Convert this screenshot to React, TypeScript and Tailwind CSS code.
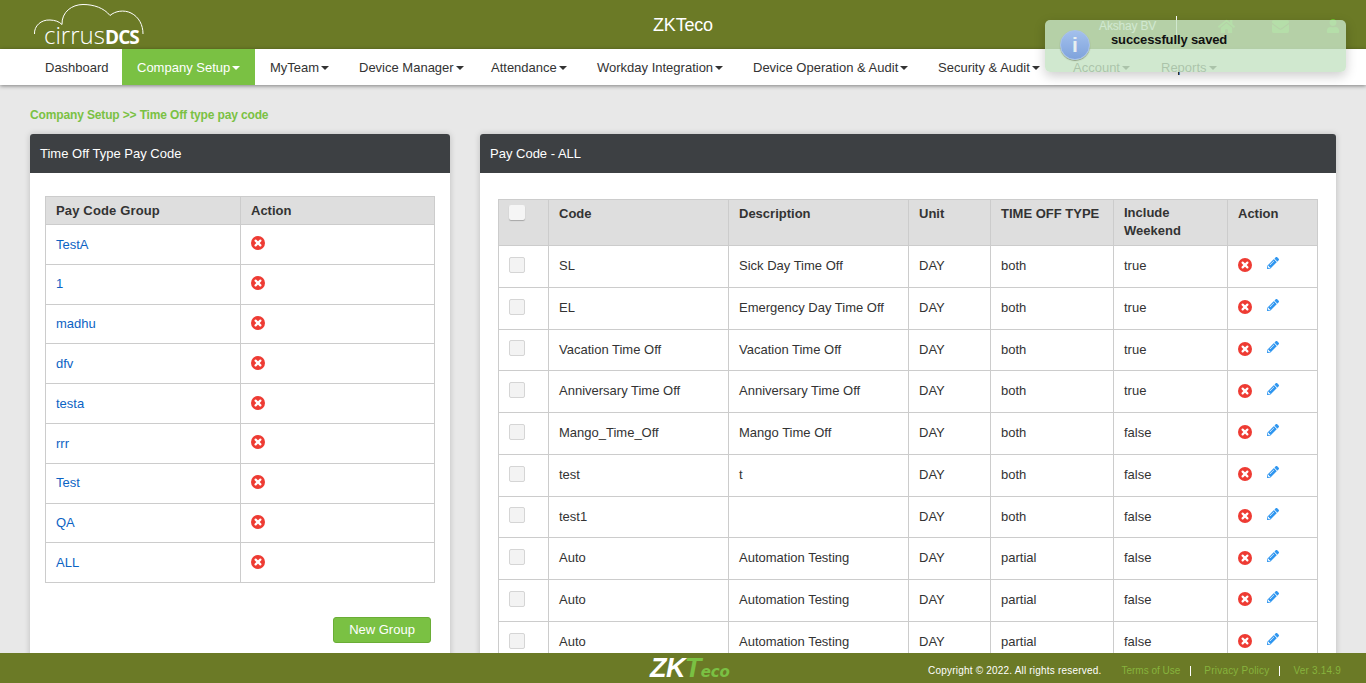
import { FaEnvelope, FaHome, FaPencilAlt, FaUser } from "react-icons/fa";

const NAV_ITEMS = [
  { label: "Dashboard", width: "w-[92px]" },
  { label: "Company Setup", width: "w-[133px]", caret: true, active: true },
  { label: "MyTeam", width: "w-[89px]", caret: true },
  { label: "Device Manager", width: "w-[132px]", caret: true },
  { label: "Attendance", width: "w-[106px]", caret: true },
  { label: "Workday Integration", width: "w-[156px]", caret: true },
  { label: "Device Operation & Audit", width: "w-[185px]", caret: true },
  { label: "Security & Audit", width: "w-[135px]", caret: true },
  { label: "Account", width: "w-[88px]", caret: true },
  { label: "Reports", width: "w-[90px]", caret: true },
];

const GROUPS = ["TestA", "1", "madhu", "dfv", "testa", "rrr", "Test", "QA", "ALL"];

const PAY_CODES = [
  ["SL", "Sick Day Time Off", "DAY", "both", "true"],
  ["EL", "Emergency Day Time Off", "DAY", "both", "true"],
  ["Vacation Time Off", "Vacation Time Off", "DAY", "both", "true"],
  ["Anniversary Time Off", "Anniversary Time Off", "DAY", "both", "true"],
  ["Mango_Time_Off", "Mango Time Off", "DAY", "both", "false"],
  ["test", "t", "DAY", "both", "false"],
  ["test1", "", "DAY", "both", "false"],
  ["Auto", "Automation Testing", "DAY", "partial", "false"],
  ["Auto", "Automation Testing", "DAY", "partial", "false"],
  ["Auto", "Automation Testing", "DAY", "partial", "false"],
];

function DeleteIcon() {
  return (
    <svg width="14" height="14" viewBox="0 0 14 14" className="block -mt-[2px]">
      <circle cx="7" cy="7" r="7" fill="#ee3b33" />
      <path d="M4.6 4.6l4.8 4.8M9.4 4.6l-4.8 4.8" stroke="#fff" strokeWidth="2.2" strokeLinecap="round" />
    </svg>
  );
}

function Logo() {
  return (
    <div className="relative w-[150px] h-[49px] text-white">
      <svg width="150" height="49" viewBox="0 0 150 49" fill="none" className="absolute left-0 top-0">
        <path
          d="M34.5 34C34 26 41 19.5 50 20C55 20.2 59 21.5 62 24.5C61.5 12 72 4.5 83 4.5C94 4.5 104 8 110 15.5C115 11 124 9.5 131 13C139 17 143 25 143 34"
          stroke="#fff"
          strokeWidth="1"
        />
      </svg>
      <span className="absolute left-[44px] top-[19px] font-['Open_Sans',sans-serif] text-[24px] leading-[32px] font-light">
        cirrus
      </span>
      <span className="absolute left-[105px] top-[24px] font-['Open_Sans',sans-serif] text-[19px] leading-[26px] font-bold tracking-[-0.9px]">
        DCS
      </span>
    </div>
  );
}

function PanelHeader({ title }: { title: string }) {
  return <div className="h-[39px] bg-[#3d4043] rounded-t-[3px] px-[10px] flex items-center text-white">{title}</div>;
}

export default function App() {
  return (
    <div className="relative w-[1366px] h-[683px] overflow-hidden bg-[#e8e8e8] font-['Liberation_Sans',Arial,sans-serif] text-[13px] text-[#333]">
      <header className="h-[49px] bg-[#6b7a26] grid grid-cols-[1fr_auto_1fr] items-center">
        <Logo />
        <div className="text-white text-[18px] tracking-[-0.2px] pt-[1px]">ZKTeco</div>
        <div className="flex items-center justify-end h-full pt-[3px]">
          <span className="text-white text-[12px] tracking-[-0.2px]">Akshay BV</span>
          <span className="w-px h-[20px] bg-white ml-[20px] mr-[41px]" />
          <FaHome size={17} className="text-[#6cc52c] mr-[37px]" />
          <FaEnvelope size={17} className="text-[#6cc52c] mr-[37px]" />
          <FaUser size={14} className="text-[#6cc52c] mr-[26px]" />
        </div>
      </header>

      <nav className="h-[36px] bg-white pl-[30px] flex shadow-[0_1px_4px_rgba(0,0,0,0.45)] relative">
        {NAV_ITEMS.map((item) => (
          <div
            key={item.label}
            className={
              item.active
                ? `${item.width} px-[15px] pt-[1px] flex items-center whitespace-nowrap bg-[#7ac143] text-white`
                : `${item.width} px-[15px] pt-[1px] flex items-center whitespace-nowrap text-[#333]`
            }
          >
            {item.label}
            {item.caret && (
              <span className="ml-[2px] w-0 h-0 border-x-[4px] border-x-transparent border-t-[4px] border-t-current" />
            )}
          </div>
        ))}
        <span className="absolute left-[1178px] top-[23px] w-px h-[3px] bg-[#333]" />
      </nav>

      <div className="pt-[22px] px-[30px]">
        <div className="h-[16px] leading-[16px] text-[12px] font-bold tracking-[-0.14px] text-[#7ac143]">
          Company Setup &gt;&gt; Time Off type pay code
        </div>

        <div className="mt-[11px] flex gap-[30px] items-start">
          <section className="w-[420px] h-[560px] bg-white rounded-t-[3px] shadow-[0_0_6px_rgba(0,0,0,0.18)]">
            <PanelHeader title="Time Off Type Pay Code" />
            <div className="pt-[23px] px-[15px]">
              <table className="w-[390px] table-fixed border-collapse border border-[#ccc]">
                <thead>
                  <tr className="h-[28px] bg-[#dedede] font-bold">
                    <th className="w-[195px] border border-[#ccc] px-[10px] text-left tracking-[0.15px]">Pay Code Group</th>
                    <th className="border border-[#ccc] px-[10px] text-left">Action</th>
                  </tr>
                </thead>
                <tbody>
                  {GROUPS.map((group) => (
                    <tr key={group} className="h-[39.8px]">
                      <td className="border border-[#ccc] px-[10px] text-[#0c63c4]">{group}</td>
                      <td className="border border-[#ccc] px-[10px]">
                        <DeleteIcon />
                      </td>
                    </tr>
                  ))}
                </tbody>
              </table>
              <div className="flex justify-end mt-[34px] pr-[4px]">
                <button className="w-[98px] h-[26px] rounded-[3px] bg-[#7ac143] border border-[#6aad36] text-white text-[13px]">
                  New Group
                </button>
              </div>
            </div>
          </section>

          <section className="w-[856px] h-[560px] bg-white rounded-t-[3px] shadow-[0_0_6px_rgba(0,0,0,0.18)]">
            <PanelHeader title="Pay Code - ALL" />
            <div className="pt-[26px] pl-[18px]">
              <table className="w-[820px] table-fixed border-collapse border border-[#ccc]">
                <thead>
                  <tr className="h-[46px] bg-[#dedede] font-bold align-top">
                    <th className="w-[50px] border border-[#ccc] px-[10px] pt-[5px] text-left">
                      <span className="block w-[16px] h-[15px] rounded-[2px] bg-[#f5f5f5] shadow-[0_1px_1px_rgba(0,0,0,0.25)]" />
                    </th>
                    <th className="w-[180px] border border-[#ccc] px-[10px] pt-[4px] text-left">Code</th>
                    <th className="w-[180px] border border-[#ccc] px-[10px] pt-[4px] text-left">Description</th>
                    <th className="w-[82px] border border-[#ccc] px-[10px] pt-[4px] text-left">Unit</th>
                    <th className="w-[123px] border border-[#ccc] px-[10px] pt-[4px] text-left">TIME OFF TYPE</th>
                    <th className="w-[114px] border border-[#ccc] px-[10px] pt-[4px] text-left leading-[18px]">
                      Include Weekend
                    </th>
                    <th className="border border-[#ccc] px-[10px] pt-[4px] text-left">Action</th>
                  </tr>
                </thead>
                <tbody>
                  {PAY_CODES.map((row, i) => (
                    <tr key={i} className="h-[41.75px]">
                      <td className="border border-[#ccc] px-[10px]">
                        <span className="block w-[16px] h-[16px] -mt-[3px] rounded-[2px] bg-[#f3f3f3] border border-[#d5d5d5]" />
                      </td>
                      {row.map((cell, j) => (
                        <td key={j} className="border border-[#ccc] px-[10px] pb-[1px]">
                          {cell}
                        </td>
                      ))}
                      <td className="border border-[#ccc] px-[10px]">
                        <div className="flex items-start gap-[15px]">
                          <DeleteIcon />
                          <FaPencilAlt size={12} className="text-[#2f96f0] -mt-[3px]" />
                        </div>
                      </td>
                    </tr>
                  ))}
                </tbody>
              </table>
            </div>
          </section>
        </div>
      </div>

      <footer className="absolute left-0 right-0 bottom-0 h-[30px] bg-[#6b7a26] grid grid-cols-[1fr_auto_1fr] items-center">
        <div />
        <div className="ml-[16px] w-[82px] whitespace-nowrap italic font-bold text-[27px] leading-[30px] tracking-[-0.6px] text-white">
          ZK<span className="text-[#7ac143]">T</span>
          <span className="text-[#7ac143] font-['DejaVu_Sans',sans-serif] text-[15px] tracking-[-0.1px]">eco</span>
        </div>
        <div className="flex items-center justify-end text-[10px] tracking-[0.2px] pr-[25px] pt-[1px]">
          <span className="text-white">Copyright © 2022. All rights reserved.</span>
          <span className="text-[#87b33d] ml-[20px] tracking-[0px]">Terms of Use</span>
          <span className="w-px h-[10px] bg-white ml-[10px] mr-[13px]" />
          <span className="text-[#87b33d]">Privacy Policy</span>
          <span className="w-px h-[10px] bg-white ml-[10px] mr-[13px]" />
          <span className="text-[#87b33d]">Ver 3.14.9</span>
        </div>
      </footer>

      <div className="absolute left-[1045px] top-[20px] w-[301px] h-[52px] rounded-[5px] bg-[rgba(198,227,196,0.82)] shadow-[0_4px_12px_rgba(0,0,0,0.2)]">
        <div className="absolute left-[15px] top-[10px] w-[30px] h-[30px] rounded-full bg-linear-to-b from-[#a3c0ec] to-[#7fa3dc] border border-[#a9c2ea] shadow-[0_1px_1px_rgba(80,90,60,0.5)] flex items-center justify-center text-[#e8eff0] font-bold text-[21px]">
          i
        </div>
        <div className="absolute left-[66px] top-[10px] text-[13px] font-bold text-[#111] tracking-[-0.13px]">
          successfully saved
        </div>
      </div>
    </div>
  );
}
